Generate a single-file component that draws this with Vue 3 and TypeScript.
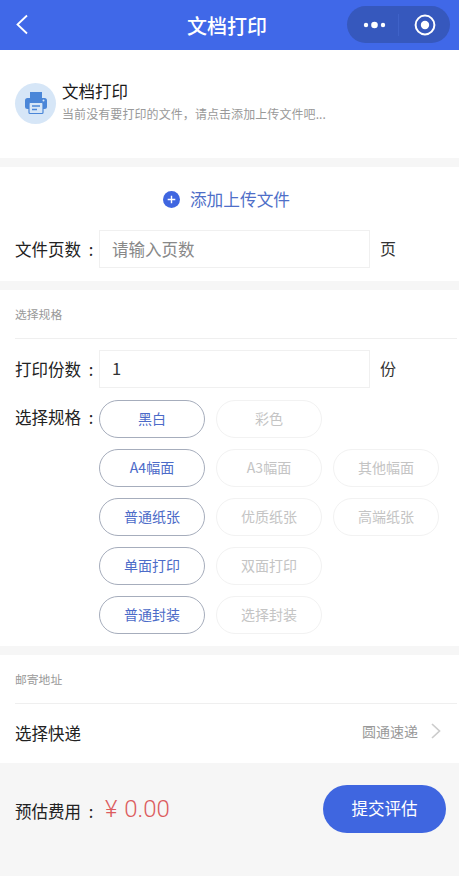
<script setup lang="ts">
interface Opt { label: string; active?: boolean }
const rows: Opt[][] = [
  [{ label: '黑白', active: true }, { label: '彩色' }],
  [{ label: 'A4幅面', active: true }, { label: 'A3幅面' }, { label: '其他幅面' }],
  [{ label: '普通纸张', active: true }, { label: '优质纸张' }, { label: '高端纸张' }],
  [{ label: '单面打印', active: true }, { label: '双面打印' }],
  [{ label: '普通封装', active: true }, { label: '选择封装' }],
]
</script>

<template>
  <div class="page">
    <header class="nav">
      <svg class="back" width="14" height="22" viewBox="0 0 14 22"><path d="M12 1.5 L2.5 10.5 L12 19.5" fill="none" stroke="#fff" stroke-width="1.8" /></svg>
      <span class="nav-title">文档打印</span>
      <div class="capsule">
        <svg width="23" height="8" viewBox="0 0 23 8"><circle cx="3" cy="4" r="2.2" fill="#fff" /><circle cx="11.5" cy="4" r="3.3" fill="#fff" /><circle cx="20" cy="4" r="2.2" fill="#fff" /></svg>
        <i class="cap-div"></i>
        <svg width="22" height="22" viewBox="0 0 22 22"><circle cx="11" cy="11" r="9.4" fill="none" stroke="#fff" stroke-width="2" /><circle cx="11" cy="11" r="4.2" fill="#fff" /></svg>
      </div>
    </header>

    <section class="intro">
      <div class="avatar">
        <svg width="24" height="24" viewBox="0 0 24 24">
          <path d="M6 1h12v6H6z" fill="#4a86d8" />
          <rect x="1" y="7" width="22" height="11" rx="2.5" fill="#4a86d8" />
          <rect x="5" y="11.5" width="14" height="11" rx="1" fill="#d6e6f7" stroke="#4a86d8" stroke-width="1.2" />
          <path d="M8 15h8M8 18.5h5" stroke="#4a86d8" stroke-width="1.3" />
          <circle cx="19.5" cy="9.5" r="1" fill="#d6e6f7" />
        </svg>
      </div>
      <div class="intro-text">
        <div class="intro-title">文档打印</div>
        <div class="intro-sub">当前没有要打印的文件，请点击添加上传文件吧...</div>
      </div>
    </section>

    <section class="card upload-card">
      <div class="upload">
        <svg width="17" height="17" viewBox="0 0 17 17"><circle cx="8.5" cy="8.5" r="8.5" fill="#3f66e0" /><path d="M4.7 8.5h7.6M8.5 4.7v7.6" stroke="#fff" stroke-width="1.4" /></svg>
        <span>添加上传文件</span>
      </div>
      <div class="field">
        <span class="label">文件页数 :</span>
        <div class="box placeholder">请输入页数</div>
        <span class="unit">页</span>
      </div>
    </section>

    <section class="card spec-card">
      <div class="sec-title">选择规格</div>
      <div class="field copies">
        <span class="label">打印份数 :</span>
        <div class="box">1</div>
        <span class="unit">份</span>
      </div>
      <div class="spec">
        <span class="label spec-label">选择规格 :</span>
        <div class="opts">
          <div v-for="(row, i) in rows" :key="i" class="opt-row">
            <span v-for="o in row" :key="o.label" class="opt" :class="{ on: o.active }">{{ o.label }}</span>
          </div>
        </div>
      </div>
    </section>

    <section class="card addr-card">
      <div class="sec-title">邮寄地址</div>
      <div class="express">
        <span class="express-label">选择快递</span>
        <div class="express-val">
          <span>圆通速递</span>
          <svg width="12" height="16" viewBox="0 0 12 16"><path d="M2 1 L9.5 8 L2 15" fill="none" stroke="#ccc" stroke-width="1.7" /></svg>
        </div>
      </div>
    </section>

    <footer class="foot">
      <div class="fee">
        <span class="label fee-label">预估费用 :</span>
        <span class="price">¥ 0.00</span>
      </div>
      <div class="submit">提交评估</div>
    </footer>
  </div>
</template>

<style>
html, body { margin: 0; background: #f6f6f6; }
</style>

<style scoped>
.page {
  width: 459px;
  height: 876px;
  overflow: hidden;
  background: #f6f6f6;
  font-family: "Noto Sans CJK SC", "Noto Sans", sans-serif;
  color: #222;
}
.nav {
  height: 50px;
  background: #4068e8;
  display: flex;
  align-items: center;
  position: relative;
}
.back { margin-left: 15px; }
.nav-title {
  position: absolute;
  left: 0;
  width: 454px;
  text-align: center;
  color: #fff;
  font-size: 20px;
  font-weight: 500;
}
.capsule {
  position: absolute;
  left: 347px;
  top: 6px;
  width: 103px;
  height: 37px;
  border-radius: 19px;
  background: #3658bd;
  display: flex;
  align-items: center;
  box-sizing: border-box;
  padding-left: 16px;
}
.cap-div { width: 1px; height: 22px; background: #3f62c8; margin: 0 15px 0 12px; }
.intro {
  height: 108px;
  box-sizing: border-box;
  padding: 0 0 2px 15px;
  background: #fff;
  display: flex;
  align-items: center;
  gap: 6px;
}
.avatar {
  width: 41px;
  height: 41px;
  border-radius: 50%;
  background: #d6e6f7;
  display: flex;
  align-items: center;
  justify-content: center;
}
.intro-text { margin-bottom: 3px; }
.intro-title { font-size: 16.5px; line-height: 20px; color: #1a1a1a; }
.intro-sub { font-size: 12px; line-height: 18px; color: #999; margin-top: 4px; letter-spacing: 0.08px; }
.card { background: #fff; margin-top: 9px; }
.upload-card { height: 114px; padding-top: 1px; box-sizing: border-box; }
.upload {
  height: 62px;
  display: flex;
  align-items: center;
  justify-content: center;
  gap: 10px;
  padding-right: 6px;
  color: #4f6fc8;
  font-size: 16.7px;
}
.field { display: flex; align-items: center; padding-left: 15px; height: 38px; }
.label { font-size: 16.5px; color: #222; width: 84px; word-spacing: 4px; white-space: nowrap; flex: none; line-height: 36px; }
.box {
  width: 271px;
  height: 38px;
  box-sizing: border-box;
  border: 1px solid #f0f0f0;
  padding: 0 0 2px 12px;
  display: flex;
  align-items: center;
  font-size: 16.5px;
  color: #333;
}
.placeholder { color: #888; padding-bottom: 0; }
.unit { font-size: 16px; margin: -3px 0 0 10px; color: #333; line-height: 36px; }
.spec-card { height: 356px; }
.sec-title {
  margin: 0 2px 0 15px;
  height: 48px;
  line-height: 48px;
  font-size: 11.8px;
  color: #999;
  border-bottom: 1px solid #efefef;
}
.copies { margin-top: 11px; }
.spec { display: flex; padding-left: 15px; margin-top: 12px; }
.spec-label { line-height: 34px; }
.opts { display: flex; flex-direction: column; gap: 11px; }
.opt-row { display: flex; gap: 11px; }
.opt {
  width: 106px;
  height: 38px;
  box-sizing: border-box;
  border: 1px solid #f2f2f2;
  border-radius: 19px;
  padding-bottom: 2px;
  display: flex;
  align-items: center;
  justify-content: center;
  font-size: 14px;
  color: #c4c4c4;
}
.opt.on { border-color: #a6adbc; color: #4c6bc8; }
.addr-card { height: 108px; }
.express {
  height: 59px;
  display: flex;
  align-items: center;
  justify-content: space-between;
  padding: 0 17px 0 15px;
}
.express-label { font-size: 16.5px; color: #222; margin-top: -1px; }
.express-val { display: flex; align-items: center; gap: 12px; font-size: 14px; color: #999; margin-top: -6px; }
.foot {
  display: flex;
  align-items: center;
  justify-content: space-between;
  padding: 22px 13px 0 15px;
}
.fee { display: flex; align-items: center; gap: 6px; }
.fee-label { margin-top: 3px; }
.price { font-size: 24px; font-weight: 300; color: #dc5c5e; font-family: Roboto, "Noto Sans", sans-serif; margin-top: 0; word-spacing: 1px; }
.submit {
  width: 123px;
  height: 48px;
  box-sizing: border-box;
  padding-bottom: 3px;
  border-radius: 24px;
  background: #3f66e0;
  color: #fff;
  font-size: 16.5px;
  display: flex;
  align-items: center;
  justify-content: center;
}
</style>
